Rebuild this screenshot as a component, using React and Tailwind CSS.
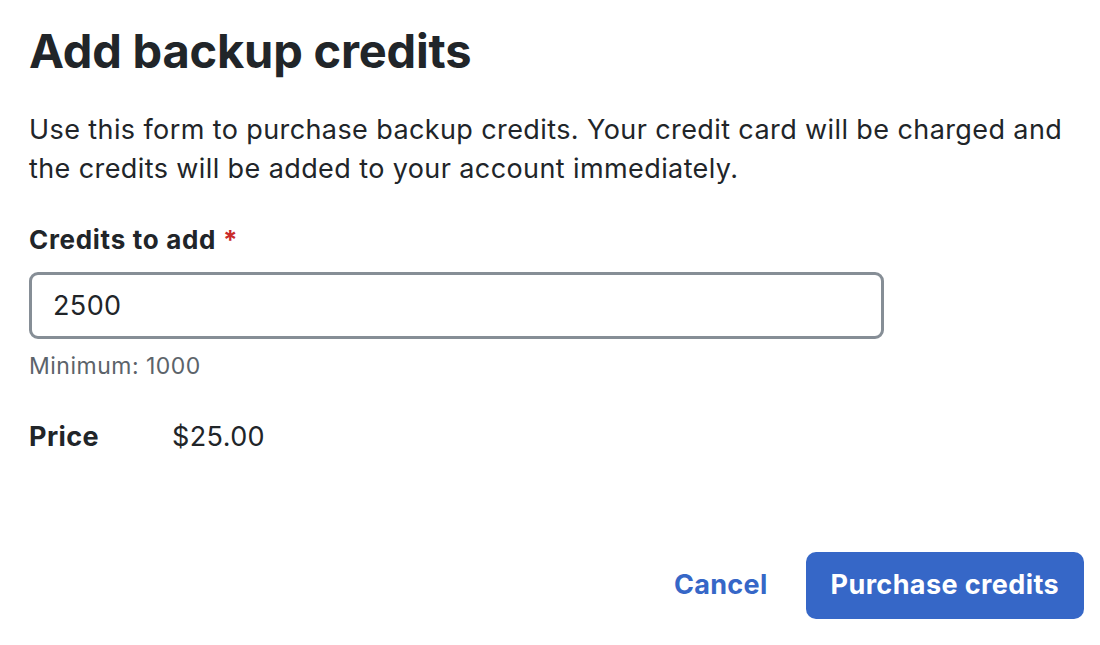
import React, { useState } from "react";

export default function App() {
  const [credits, setCredits] = useState("2500");
  const price = (Number(credits) / 100 || 0).toFixed(2);

  return (
    <div className="w-[1100px] h-[645px] bg-white text-[#212529] font-['Inter','Noto_Sans',sans-serif] flex flex-col">
      <div className="pl-[29px] pr-[16px] pt-[23px] flex-1">
        {/* Title */}
        <h1 className="text-[47px] leading-[56px] font-bold tracking-[-0.2px]">Add backup credits</h1>

        {/* Description */}
        <p className="mt-[31px] text-[27px] leading-[39px] tracking-[0.4px]">
          Use this form to purchase backup credits. Your credit card will be charged and the credits will be added to your account immediately.
        </p>

        {/* Credits field */}
        <label className="block mt-[34px] text-[26px] leading-[36px] font-bold tracking-[0.7px]">
          Credits to add <span className="text-[#c92a2a]">*</span>
        </label>
        <input
          value={credits}
          onChange={e => setCredits(e.target.value)}
          className="mt-[14px] w-[855px] h-[67px] px-[21px] border-[3px] border-[#868e96] rounded-[9px] text-[27px] tracking-[0.4px] outline-none"
        />
        <p className="mt-[12px] text-[23px] leading-[30px] tracking-[0.5px] text-[#5c636a]">Minimum: 1000</p>

        {/* Price */}
        <div className="mt-[38px] flex text-[27px] leading-[36px] tracking-[0.4px]">
          <span className="w-[143px] font-bold">Price</span>
          <span>${price}</span>
        </div>
      </div>

      {/* Footer */}
      <div className="flex justify-end items-center gap-[38px] pr-[16px] pb-[26px]">
        <button className="text-[27px] font-bold tracking-[0.3px] text-[#3667c7]">Cancel</button>
        <button className="h-[67px] px-[25px] rounded-[10px] bg-[#3667c7] text-white text-[27px] font-bold tracking-[0.4px]">
          Purchase credits
        </button>
      </div>
    </div>
  );
}
